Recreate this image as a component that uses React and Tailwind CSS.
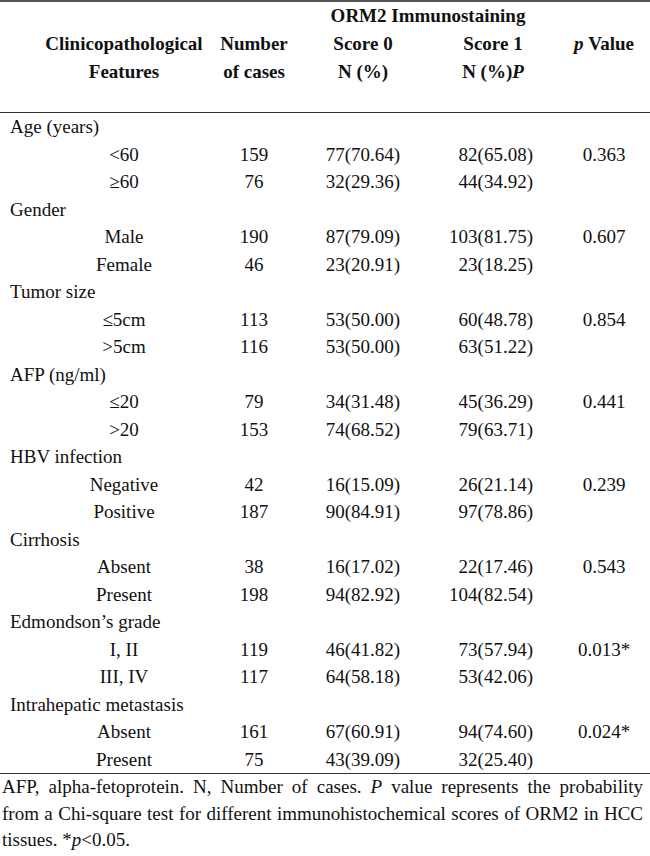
import React from 'react';

const groups = [
  {
    label: 'Age (years)',
    p: '0.363',
    rows: [
      ['<60', '159', '77(70.64)', '82(65.08)'],
      ['\u226560', '76', '32(29.36)', '44(34.92)'],
    ],
  },
  {
    label: 'Gender',
    p: '0.607',
    rows: [
      ['Male', '190', '87(79.09)', '103(81.75)'],
      ['Female', '46', '23(20.91)', '23(18.25)'],
    ],
  },
  {
    label: 'Tumor size',
    p: '0.854',
    rows: [
      ['\u22645cm', '113', '53(50.00)', '60(48.78)'],
      ['>5cm', '116', '53(50.00)', '63(51.22)'],
    ],
  },
  {
    label: 'AFP (ng/ml)',
    p: '0.441',
    rows: [
      ['\u226420', '79', '34(31.48)', '45(36.29)'],
      ['>20', '153', '74(68.52)', '79(63.71)'],
    ],
  },
  {
    label: 'HBV infection',
    p: '0.239',
    rows: [
      ['Negative', '42', '16(15.09)', '26(21.14)'],
      ['Positive', '187', '90(84.91)', '97(78.86)'],
    ],
  },
  {
    label: 'Cirrhosis',
    p: '0.543',
    rows: [
      ['Absent', '38', '16(17.02)', '22(17.46)'],
      ['Present', '198', '94(82.92)', '104(82.54)'],
    ],
  },
  {
    label: 'Edmondson\u2019s grade',
    p: '0.013*',
    rows: [
      ['I, II', '119', '46(41.82)', '73(57.94)'],
      ['III, IV', '117', '64(58.18)', '53(42.06)'],
    ],
  },
  {
    label: 'Intrahepatic metastasis',
    p: '0.024*',
    rows: [
      ['Absent', '161', '67(60.91)', '94(74.60)'],
      ['Present', '75', '43(39.09)', '32(25.40)'],
    ],
  },
];

const cols = 'grid grid-cols-[210px_88px_130px_130px_92px]';

export default function App() {
  return (
    <div className="w-[650px] h-[856px] bg-white text-[#111] font-['Liberation_Serif',serif] text-[19px] overflow-hidden">
      {/* top rule */}
      <div className="h-[2px] bg-[#555]" />

      {/* header */}
      <div className={`${cols} font-bold pb-[26px] leading-none`}>
        <div className="h-[27px]" />
        <div />
        <div className="col-span-2 flex items-center justify-center">ORM2 Immunostaining</div>
        <div />

        <div className="h-[28.5px] pl-[38px] flex items-center justify-center">Clinicopathological</div>
        <div className="flex items-center justify-center">Number</div>
        <div className="flex items-center justify-center">Score 0</div>
        <div className="flex items-center justify-center">Score 1</div>
        <div className="flex items-center justify-center">
          <i>p</i>&nbsp;Value
        </div>

        <div className="h-[28.5px] pl-[38px] flex items-center justify-center">Features</div>
        <div className="flex items-center justify-center">of cases</div>
        <div className="flex items-center justify-center">N (%)</div>
        <div className="flex items-center justify-center">
          N (%)<i>P</i>
        </div>
        <div />
      </div>

      <div className="h-px bg-[#333]" />

      {/* body */}
      <div className="leading-none">
        {groups.map((g) => (
          <React.Fragment key={g.label}>
            <div className="h-[27.5px] pl-[10px] flex items-center">{g.label}</div>
            {g.rows.map((r, i) => (
              <div key={r[0]} className={`${cols} h-[27.5px] items-center`}>
                <div className="pl-[38px] text-center">{r[0]}</div>
                <div className="text-center">{r[1]}</div>
                <div className="text-center">{r[2]}</div>
                <div className="text-right pr-[25px]">{r[3]}</div>
                <div className="text-center">{i === 0 ? g.p : ''}</div>
              </div>
            ))}
          </React.Fragment>
        ))}
      </div>

      <div className="h-px bg-[#333]" />

      {/* footnote */}
      <div className="pl-[2px] pr-[7px] leading-[26.5px]">
        <div className="text-justify [text-align-last:justify]">
          AFP, alpha-fetoprotein. N, Number of cases. <i>P</i> value represents the probability
        </div>
        <div className="text-justify [text-align-last:justify]">
          from a Chi-square test for different immunohistochemical scores of ORM2 in HCC
        </div>
        <div>
          tissues. *<i>p</i>&lt;0.05.
        </div>
      </div>
    </div>
  );
}
